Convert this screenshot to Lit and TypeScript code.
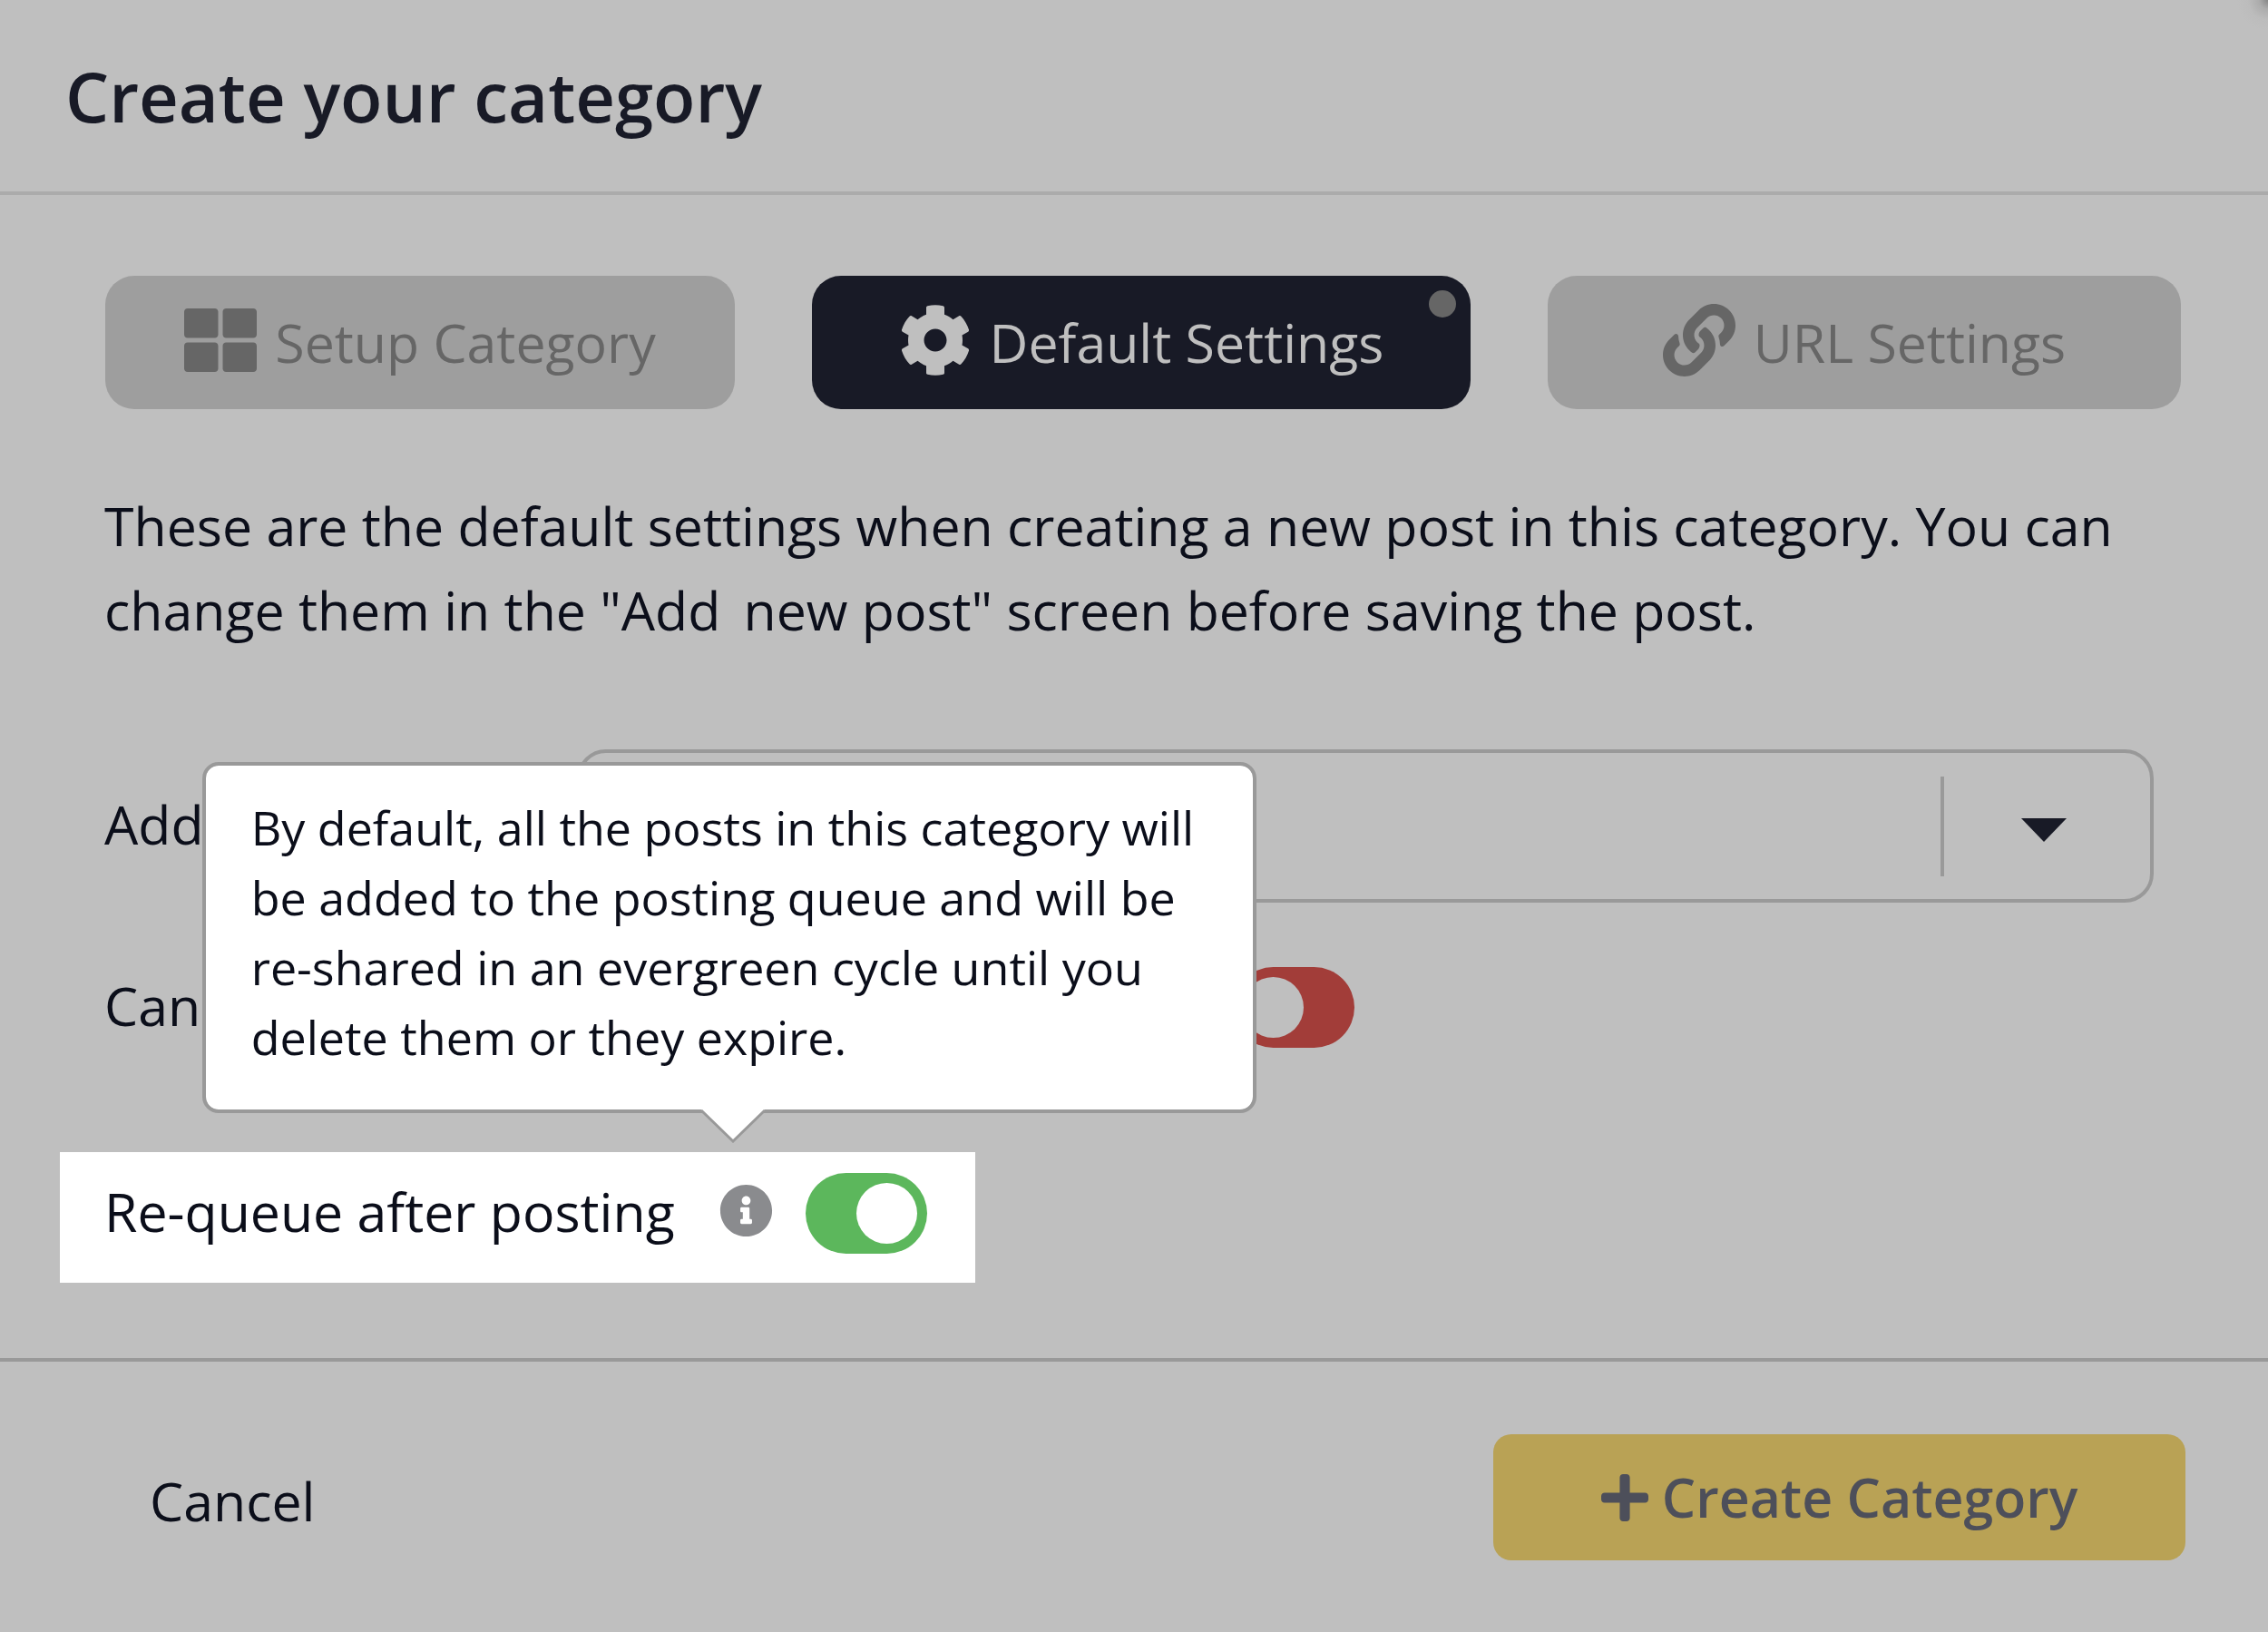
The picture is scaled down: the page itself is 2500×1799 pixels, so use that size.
import { LitElement, html, css, svg } from "lit";
import { customElement, state } from "lit/decorators.js";

const icons = {
  grid: svg`<path d="M296 32h192c13.255 0 24 10.745 24 24v160c0 13.255-10.745 24-24 24H296c-13.255 0-24-10.745-24-24V56c0-13.255 10.745-24 24-24zm-80 0H24C10.745 32 0 42.745 0 56v160c0 13.255 10.745 24 24 24h192c13.255 0 24-10.745 24-24V56c0-13.255-10.745-24-24-24zM0 296v160c0 13.255 10.745 24 24 24h192c13.255 0 24-10.745 24-24V296c0-13.255-10.745-24-24-24H24c-13.255 0-24 10.745-24 24zm296 184h192c13.255 0 24-10.745 24-24V296c0-13.255-10.745-24-24-24H296c-13.255 0-24 10.745-24 24v160c0 13.255 10.745 24 24 24z"/>`,
  cog: svg`<path d="M487.4 315.7l-42.6-24.6c4.3-23.2 4.3-47 0-70.2l42.6-24.6c4.9-2.8 7.1-8.6 5.5-14-11.1-35.6-30-67.8-54.7-94.6-3.8-4.1-10-5.1-14.8-2.3L380.8 110c-17.9-15.4-38.5-27.3-60.8-35.1V25.8c0-5.6-3.9-10.5-9.4-11.7-36.7-8.2-74.3-7.8-109.2 0-5.5 1.2-9.4 6.1-9.4 11.7V75c-22.2 7.9-42.8 19.8-60.8 35.1L88.7 85.5c-4.9-2.8-11-1.9-14.8 2.3-24.7 26.7-43.6 58.9-54.7 94.6-1.7 5.4.6 11.2 5.5 14L67.3 221c-4.3 23.2-4.3 47 0 70.2l-42.6 24.6c-4.9 2.8-7.1 8.6-5.5 14 11.1 35.6 30 67.8 54.7 94.6 3.8 4.1 10 5.1 14.8 2.3l42.6-24.6c17.9 15.4 38.5 27.3 60.8 35.1v49.2c0 5.6 3.9 10.5 9.4 11.7 36.7 8.2 74.3 7.8 109.2 0 5.5-1.2 9.4-6.1 9.4-11.7v-49.2c22.2-7.9 42.8-19.8 60.8-35.1l42.6 24.6c4.9 2.8 11 1.9 14.8-2.3 24.7-26.7 43.6-58.9 54.7-94.6 1.5-5.5-.7-11.3-5.6-14.1zM256 336c-44.1 0-80-35.9-80-80s35.9-80 80-80 80 35.9 80 80-35.9 80-80 80z"/>`,
  link: svg`<path d="M326.612 185.391c59.747 59.809 58.927 155.698.36 214.59-.11.12-.24.25-.36.37l-67.2 67.2c-59.27 59.27-155.699 59.262-214.96 0-59.27-59.26-59.27-155.7 0-214.96l37.106-37.106c9.84-9.84 26.786-3.3 27.294 10.606.648 17.722 3.826 35.527 9.69 52.721 1.986 5.822.567 12.262-3.783 16.612l-13.087 13.087c-28.026 28.026-28.905 73.66-1.155 101.96 28.024 28.579 74.086 28.749 102.325.51l67.2-67.19c28.191-28.191 28.073-73.757 0-101.83-3.701-3.694-7.429-6.564-10.341-8.569a16.037 16.037 0 0 1-6.947-12.606c-.396-10.567 3.348-21.456 11.698-29.806l21.054-21.055c5.521-5.521 14.182-6.199 20.584-1.731a152.482 152.482 0 0 1 20.522 17.197zM467.547 44.449c-59.261-59.262-155.69-59.27-214.96 0l-67.2 67.2c-.12.12-.25.25-.36.37-58.566 58.892-59.387 154.781.36 214.59a152.454 152.454 0 0 0 20.521 17.196c6.402 4.468 15.064 3.789 20.584-1.731l21.054-21.055c8.35-8.35 12.094-19.239 11.698-29.806a16.037 16.037 0 0 0-6.947-12.606c-2.912-2.005-6.64-4.875-10.341-8.569-28.073-28.073-28.191-73.639 0-101.83l67.2-67.19c28.239-28.239 74.3-28.069 102.325.51 27.75 28.3 26.872 73.934-1.155 101.96l-13.087 13.087c-4.35 4.35-5.769 10.79-3.783 16.612 5.864 17.194 9.042 34.999 9.69 52.721.509 13.906 17.454 20.446 27.294 10.606l37.106-37.106c59.271-59.259 59.271-155.699.001-214.959z"/>`,
  info: svg`<path d="M256 8C119.043 8 8 119.083 8 256c0 136.997 111.043 248 248 248s248-111.003 248-248C504 119.083 392.957 8 256 8zm0 110c23.196 0 42 18.804 42 42s-18.804 42-42 42-42-18.804-42-42 18.804-42 42-42zm56 254c0 6.627-5.373 12-12 12h-88c-6.627 0-12-5.373-12-12v-24c0-6.627 5.373-12 12-12h12v-64h-12c-6.627 0-12-5.373-12-12v-24c0-6.627 5.373-12 12-12h64c6.627 0 12 5.373 12 12v100h12c6.627 0 12 5.373 12 12v24z"/>`,
  plus: svg`<path d="M416 208H272V64c0-17.67-14.33-32-32-32h-32c-17.67 0-32 14.33-32 32v144H32c-17.67 0-32 14.33-32 32v32c0 17.67 14.33 32 32 32h144v144c0 17.67 14.33 32 32 32h32c17.67 0 32-14.33 32-32V304h144c17.67 0 32-14.33 32-32v-32c0-17.67-14.33-32-32-32z"/>`,
};

const tabs = [
  { label: "Setup Category", icon: icons.grid },
  { label: "Default Settings", icon: icons.cog },
  { label: "URL Settings", icon: icons.link },
];

@customElement("app-root")
export class AppRoot extends LitElement {
  @state() private active = 1;

  static styles = css`
    :host {
      display: block;
      font-family: "Open Sans", "Noto Sans", sans-serif;
      font-size: 59px;
      line-height: 93px;
      color: #0b0e1a;
      background: #bfbfbf;
    }
    * {
      box-sizing: border-box;
    }
    button,
    select {
      font: inherit;
      color: inherit;
      border: 0;
      padding: 0;
      background: none;
      cursor: pointer;
    }
    input {
      margin: 0;
    }
    svg {
      display: block;
      fill: currentColor;
      flex: none;
    }
    label {
      padding-bottom: 4px;
    }
    .dialog {
      min-height: 100vh;
      display: flex;
      flex-direction: column;
      background: radial-gradient(circle at 100% 0, #868686 0, #acacac 10px, #bcbcbc 22px, #bfbfbf 34px);
    }
    .header {
      padding: 54px 72px 53px;
      border-bottom: 4px solid #ababab;
    }
    .title {
      margin: 0;
      font-size: 76px;
      line-height: 104px;
      font-weight: 600;
      color: #181a26;
    }
    .body {
      flex: 1;
      padding: 89px 96px 83px 115px;
    }
    .tabs {
      display: grid;
      grid-template-columns: 694fr 726fr 698fr;
      gap: 85px;
      margin-left: 1px;
    }
    .tab {
      position: relative;
      display: flex;
      align-items: center;
      justify-content: center;
      gap: 20px;
      height: 147px;
      border-radius: 32px;
      background: #9e9e9e;
      color: #666;
    }
    .tab svg {
      width: 80px;
      height: 80px;
      margin-bottom: 5px;
    }
    .tab.active {
      background: #181a26;
      color: #bfbfbf;
    }
    .dot {
      position: absolute;
      top: 16px;
      right: 16px;
      width: 30px;
      height: 30px;
      border-radius: 50%;
      background: #666;
    }
    .intro {
      margin: 82px 0 107px;
    }
    .row {
      display: grid;
      align-items: center;
    }
    .row.pick {
      grid-template-columns: 521px 1fr;
      margin-right: 30px;
    }
    .row.switch {
      grid-template-columns: 1244px 1fr;
      height: 93px;
      margin-top: 67px;
    }
    .select {
      display: flex;
      align-items: center;
      height: 169px;
      border: 4px solid #999;
      border-radius: 32px;
    }
    .select select {
      flex: 1;
      height: 100%;
      padding: 0 32px;
      appearance: none;
      outline: 0;
    }
    .rule {
      width: 4px;
      height: 110px;
      background: #999;
    }
    .arrow {
      width: 50px;
      height: 26px;
      margin: 8px 92px 0 85px;
      fill: #181a26;
    }
    .toggle {
      appearance: none;
      display: flex;
      align-items: center;
      width: 134px;
      height: 89px;
      padding: 0 11px;
      border-radius: 45px;
      background: #a23d39;
      cursor: pointer;
    }
    .toggle::before {
      content: "";
      width: 67px;
      height: 67px;
      border-radius: 50%;
      background: #bfbfbf;
    }
    .toggle:checked {
      justify-content: flex-end;
      background: #5cb75c;
    }
    .toggle:checked::before {
      background: #fff;
    }
    .spotlight {
      display: flex;
      align-items: center;
      width: fit-content;
      height: 144px;
      margin: 115px 0 0 -49px;
      padding: 0 53px 10px 49px;
      background: #fff;
    }
    .help {
      position: relative;
      margin: 0 36px 5px 49px;
    }
    .help-button {
      display: block;
      color: #8a8b8e;
    }
    .help-button svg {
      width: 59px;
      height: 59px;
    }
    .tooltip {
      position: absolute;
      left: -570px;
      bottom: 137px;
      width: 1162px;
      padding: 29px 50px 42px;
      border: 4px solid #999;
      border-radius: 18px;
      background: #fff;
      background-clip: padding-box;
      font-size: 52px;
      line-height: 77px;
    }
    .tooltip p {
      margin: 0;
      white-space: nowrap;
    }
    .pointer {
      position: absolute;
      left: 546px;
      top: 100%;
      width: 70px;
      height: 38px;
      margin-top: -1px;
      fill: #fff;
    }
    .pointer .edge {
      fill: none;
      stroke: #999;
      stroke-width: 3;
    }
    .footer {
      display: flex;
      align-items: center;
      justify-content: space-between;
      padding: 80px 91px 79px 165px;
      border-top: 4px solid #999;
    }
    .cancel {
      padding-top: 8px;
    }
    .create {
      display: flex;
      align-items: center;
      justify-content: center;
      gap: 15px;
      width: 763px;
      height: 139px;
      border-radius: 20px;
      background: #b9a255;
      color: #4d4f5a;
      font-weight: 600;
    }
    .create svg {
      width: 52px;
      height: 60px;
    }
  `;

  render() {
    return html`
      <main class="dialog">
        <header class="header"><h1 class="title">Create your category</h1></header>
        <section class="body">
          <nav class="tabs">
            ${tabs.map(
              (tab, i) => html`
                <button
                  type="button"
                  class=${i === this.active ? "tab active" : "tab"}
                  @click=${() => (this.active = i)}
                >
                  <svg viewBox="0 0 512 512" aria-hidden="true">${tab.icon}</svg>
                  <span>${tab.label}</span>
                  ${i === this.active ? html`<span class="dot"></span>` : ""}
                </button>
              `
            )}
          </nav>
          <p class="intro">
            These are the default settings when creating a new post in this category. You can change
            them in the "Add&#x2006; new post" screen before saving the post.
          </p>
          <div class="row pick">
            <label for="add">Add</label>
            <div class="select">
              <select id="add"></select>
              <span class="rule"></span>
              <svg class="arrow" viewBox="0 0 50 26" aria-hidden="true"><path d="M0 0h50L25 26z" /></svg>
            </div>
          </div>
          <div class="row switch">
            <label for="can">Can</label>
            <input class="toggle" id="can" type="checkbox" />
          </div>
          <div class="spotlight">
            <label for="requeue">Re-queue after posting</label>
            <div class="help">
              <button type="button" class="help-button" aria-describedby="requeue-tip">
                <svg viewBox="0 0 512 512" aria-hidden="true">${icons.info}</svg>
              </button>
              <div class="tooltip" id="requeue-tip" role="tooltip">
                <p>By default, all the posts in this category will</p>
                <p>be added to the posting queue and will be</p>
                <p>re-shared in an evergreen cycle until you</p>
                <p>delete them or they expire.</p>
                <svg class="pointer" viewBox="0 0 70 38" aria-hidden="true">
                  <path d="M0 0h70v1L35 35 0 1z" />
                  <path class="edge" d="M0 2l35 34L70 2" />
                </svg>
              </div>
            </div>
            <input class="toggle" id="requeue" type="checkbox" checked />
          </div>
        </section>
        <footer class="footer">
          <button type="button" class="cancel">Cancel</button>
          <button type="button" class="create">
            <svg viewBox="0 0 448 512" aria-hidden="true">${icons.plus}</svg>
            <span>Create Category</span>
          </button>
        </footer>
      </main>
    `;
  }
}
